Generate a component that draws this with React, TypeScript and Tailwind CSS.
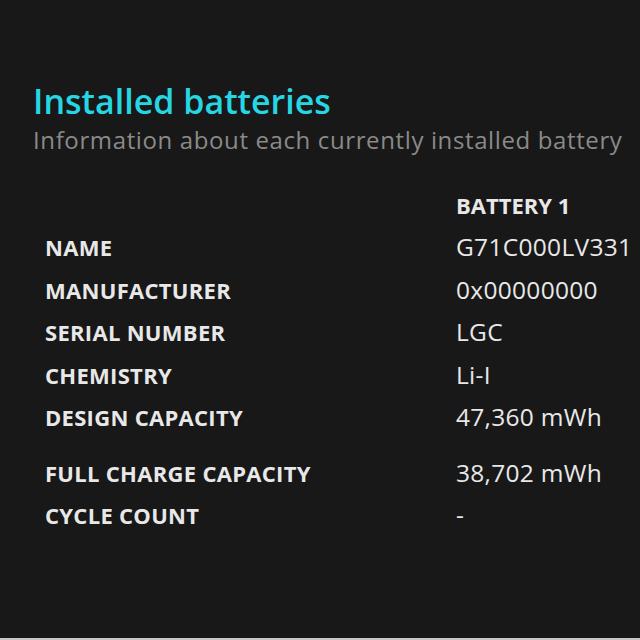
import React from "react"

const rows: { label: string; value: string; gap?: boolean }[] = [
  { label: "NAME", value: "G71C000LV331" },
  { label: "MANUFACTURER", value: "0x00000000" },
  { label: "SERIAL NUMBER", value: "LGC" },
  { label: "CHEMISTRY", value: "Li-I" },
  { label: "DESIGN CAPACITY", value: "47,360 mWh" },
  { label: "FULL CHARGE CAPACITY", value: "38,702 mWh", gap: true },
  { label: "CYCLE COUNT", value: "-" },
]

export default function App() {
  return (
    <div
      className="w-[640px] h-[640px] bg-[#181818] border-b-2 border-[#c8c8c8] overflow-hidden"
      style={{ fontFamily: '"Open Sans", "Noto Sans", sans-serif' }}
    >
      <div className="pt-[79px] pl-[33px]">
        <h1 className="text-[34px] leading-[44px] font-semibold text-[#26d6e3]">Installed batteries</h1>
        <p className="text-[24px] leading-[33px] text-[#8a8a8a] tracking-[0.62px] whitespace-nowrap">
          Information about each currently installed battery
        </p>
      </div>

      <div className="mt-[28px] pl-[45px] grid grid-cols-[411px_1fr] text-[#e8e8e8]">
        <div />
        <div className="text-[22px] font-bold leading-[42px]">BATTERY 1</div>
        {rows.map((r) => (
          <React.Fragment key={r.label}>
            <div
              className={"text-[22px] font-bold leading-[42.5px] tracking-[0.3px] " + (r.gap ? "mt-[13px]" : "")}
            >
              {r.label}
            </div>
            <div className={"text-[24.5px] leading-[42.5px] tracking-[0.3px] " + (r.gap ? "mt-[13px]" : "")}>
              {r.value}
            </div>
          </React.Fragment>
        ))}
      </div>
    </div>
  )
}
